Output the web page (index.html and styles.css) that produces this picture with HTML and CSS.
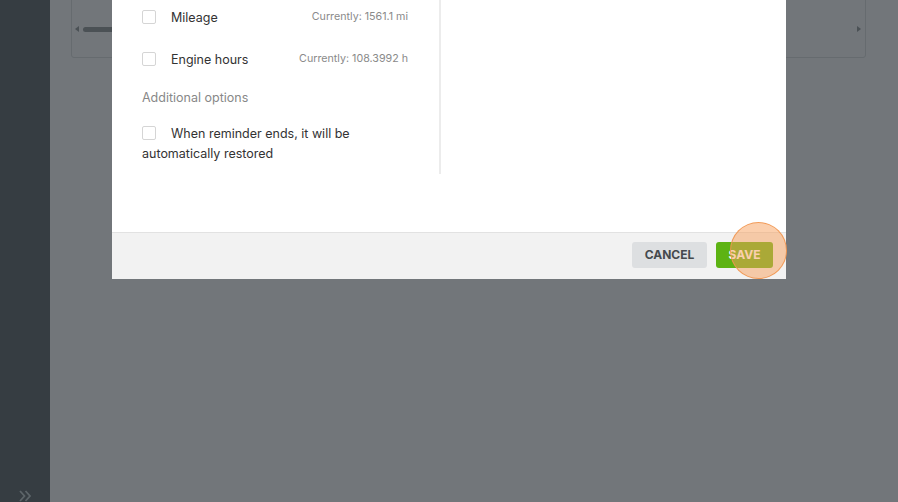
FILE: index.html
```html
<!DOCTYPE html>
<html>
<head>
<meta charset="utf-8">
<link rel="stylesheet" href="styles.css">
</head>
<body>
<div class="app">
  <aside class="sidebar">
    <svg class="expand" width="15" height="14" viewBox="0 0 15 14"><path d="M2 2 L6.5 7 L2 12 M7.5 2 L12 7 L7.5 12" fill="none" stroke="#5d6569" stroke-width="1.8"/></svg>
  </aside>
  <main class="main">
    <div class="panel">
      <span class="arrow left"></span>
      <span class="thumb"></span>
      <span class="spacer"></span>
      <span class="arrow right"></span>
    </div>
  </main>
  <div class="modal">
    <div class="modal-body">
      <div class="col left-col">
        <div class="row">
          <label class="check"><span class="box"></span>Mileage</label>
          <span class="current">Currently: 1561.1 mi</span>
        </div>
        <div class="row">
          <label class="check"><span class="box"></span>Engine hours</label>
          <span class="current">Currently: 108.3992 h</span>
        </div>
        <div class="section">Additional options</div>
        <div class="option"><span class="box"></span>When reminder ends, it will be automatically restored</div>
      </div>
      <div class="col right-col"></div>
    </div>
    <div class="modal-footer">
      <button class="btn cancel">CANCEL</button>
      <button class="btn save">SAVE</button>
    </div>
  </div>
  <span class="click-marker"></span>
</div>
</body>
</html>
```
FILE: styles.css
```css
* { box-sizing: border-box; }
html, body { margin: 0; padding: 0; }
body {
  width: 898px;
  height: 502px;
  overflow: hidden;
  font-family: Inter, "Noto Sans", sans-serif;
  background: #72767a;
}
.app {
  position: relative;
  display: flex;
  width: 898px;
  height: 502px;
}
.sidebar {
  width: 50px;
  flex: none;
  background: #363d42;
  display: flex;
  flex-direction: column;
  justify-content: flex-end;
  align-items: center;
}
.expand { margin-bottom: -1px; }
.main {
  flex: 1;
  padding: 0 32px 0 21px;
}
.panel {
  margin-top: -20px;
  height: 78px;
  border: 1px solid #666b6f;
  border-radius: 3px;
  display: flex;
  align-items: center;
  padding: 20px 4px 0 3px;
}
.arrow {
  width: 0; height: 0;
  border-top: 3.5px solid transparent;
  border-bottom: 3.5px solid transparent;
}
.arrow.left { border-right: 4px solid #4b5155; }
.arrow.right { border-left: 4px solid #4b5155; }
.thumb {
  margin-left: 4px;
  width: 120px;
  height: 5px;
  border-radius: 3px;
  background: #4b5155;
}
.spacer { flex: 1; }
.modal {
  position: absolute;
  left: 112px;
  top: 0;
  width: 674px;
  height: 279px;
  background: #fff;
  display: flex;
  flex-direction: column;
}
.modal-body {
  flex: 1;
  display: flex;
  align-items: flex-start;
}
.col { width: 329px; }
.left-col {
  margin-top: -4px;
  padding: 0 31px 10px 30px;
  border-right: 2px solid #ececec;
}
.row {
  height: 42px;
  display: flex;
  align-items: center;
  justify-content: space-between;
}
.check {
  display: flex;
  align-items: center;
  font-size: 12.5px;
  color: #333;
}
.box {
  display: inline-block;
  width: 14px;
  height: 14px;
  border: 1px solid #d5d5d5;
  border-radius: 2px;
  margin-right: 15px;
  background: #fff;
}
.current {
  font-size: 10.7px;
  color: #8a8a8a;
  margin-top: -2px;
}
.section {
  height: 34px;
  display: flex;
  align-items: center;
  font-size: 12.5px;
  color: #888;
  padding-top: 1px;
}
.option {
  margin-top: 10px;
  font-size: 12.5px;
  line-height: 20px;
  color: #333;
}
.option .box { vertical-align: -2px; }
.modal-footer {
  height: 47px;
  flex: none;
  border-top: 1px solid #e2e2e2;
  background: #f2f2f2;
  display: flex;
  justify-content: flex-end;
  align-items: center;
  gap: 9px;
  padding: 0 13px 3px 0;
}
.btn {
  height: 26px;
  border: none;
  border-radius: 3px;
  font-family: Inter, "Noto Sans", sans-serif;
  font-weight: 700;
  font-size: 12px;
  padding: 0;
}
.cancel { width: 75px; background: #dddfe1; color: #454a4e; }
.save { width: 57px; background: #5db313; color: #fff; }
.click-marker {
  position: absolute;
  left: 730px;
  top: 222px;
  width: 57px;
  height: 57px;
  border-radius: 50%;
  background: rgba(248, 160, 92, 0.5);
  border: 1.5px solid rgba(242, 150, 80, 0.9);
}
```
